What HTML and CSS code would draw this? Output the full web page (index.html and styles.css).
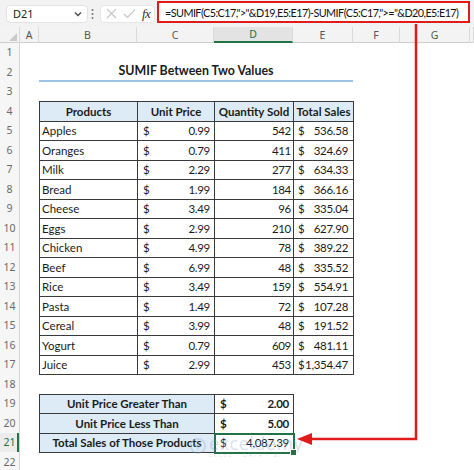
FILE: index.html
```html
<!DOCTYPE html>
<html>
<head>
<meta charset="utf-8">
<link rel="stylesheet" href="styles.css">
</head>
<body>
<div class="app">
  <div class="fbar">
    <div class="namebox">
      <span class="nb-text">D21</span>
      <svg class="chev" width="8" height="6" viewBox="0 0 8 6"><path d="M1 1.5 L4 4.5 L7 1.5" fill="none" stroke="#444" stroke-width="1.3"/></svg>
    </div>
    <svg class="vdots" width="3" height="12" viewBox="0 0 3 12"><circle cx="1.5" cy="2" r="1" fill="#777"/><circle cx="1.5" cy="6" r="1" fill="#777"/><circle cx="1.5" cy="10" r="1" fill="#777"/></svg>
    <div class="fbtns">
      <svg width="11" height="11" viewBox="0 0 11 11"><path d="M1 1 L10 10 M10 1 L1 10" fill="none" stroke="#c8c8c8" stroke-width="1.2"/></svg>
      <svg width="13" height="11" viewBox="0 0 13 11"><path d="M1 6 L4.5 9.5 L12 1.5" fill="none" stroke="#c8c8c8" stroke-width="1.2"/></svg>
      <span class="fx">fx</span>
    </div>
    <div class="formula">=SUMIF(C5:C17,"&gt;"&amp;D19,E5:E17)-SUMIF(C5:C17,"&gt;="&amp;D20,E5:E17)</div>
  </div>

  <div class="colhdr">
    <div class="corner"><span class="tri"></span></div>
    <div class="ch">A</div>
    <div class="ch">B</div>
    <div class="ch">C</div>
    <div class="ch sel">D</div>
    <div class="ch">E</div>
    <div class="ch">F</div>
    <div class="ch">G</div>
    <div class="ch"></div>
  </div>

  <div class="sheet">
    <div class="rowhdr">
      <div class="rh">1</div><div class="rh">2</div><div class="rh">3</div><div class="rh">4</div>
      <div class="rh">5</div><div class="rh">6</div><div class="rh">7</div><div class="rh">8</div>
      <div class="rh">9</div><div class="rh">10</div><div class="rh">11</div><div class="rh">12</div>
      <div class="rh">13</div><div class="rh">14</div><div class="rh">15</div><div class="rh">16</div>
      <div class="rh">17</div><div class="rh">18</div><div class="rh">19</div><div class="rh">20</div>
      <div class="rh sel">21</div><div class="rh">22</div>
    </div>

    <div class="cells">
      <div class="title">SUMIF Between Two Values</div>

      <div class="data">
        <div class="c h">Products</div><div class="c h">Unit Price</div><div class="c h">Quantity Sold</div><div class="c h">Total Sales</div>

        <div class="c t">Apples</div><div class="c m"><span>$</span><span>0.99</span></div><div class="c q">542</div><div class="c m2"><span>$</span><span>536.58</span></div>
        <div class="c t">Oranges</div><div class="c m"><span>$</span><span>0.79</span></div><div class="c q">411</div><div class="c m2"><span>$</span><span>324.69</span></div>
        <div class="c t">Milk</div><div class="c m"><span>$</span><span>2.29</span></div><div class="c q">277</div><div class="c m2"><span>$</span><span>634.33</span></div>
        <div class="c t">Bread</div><div class="c m"><span>$</span><span>1.99</span></div><div class="c q">184</div><div class="c m2"><span>$</span><span>366.16</span></div>
        <div class="c t">Cheese</div><div class="c m"><span>$</span><span>3.49</span></div><div class="c q">96</div><div class="c m2"><span>$</span><span>335.04</span></div>
        <div class="c t">Eggs</div><div class="c m"><span>$</span><span>2.99</span></div><div class="c q">210</div><div class="c m2"><span>$</span><span>627.90</span></div>
        <div class="c t">Chicken</div><div class="c m"><span>$</span><span>4.99</span></div><div class="c q">78</div><div class="c m2"><span>$</span><span>389.22</span></div>
        <div class="c t">Beef</div><div class="c m"><span>$</span><span>6.99</span></div><div class="c q">48</div><div class="c m2"><span>$</span><span>335.52</span></div>
        <div class="c t">Rice</div><div class="c m"><span>$</span><span>3.49</span></div><div class="c q">159</div><div class="c m2"><span>$</span><span>554.91</span></div>
        <div class="c t">Pasta</div><div class="c m"><span>$</span><span>1.49</span></div><div class="c q">72</div><div class="c m2"><span>$</span><span>107.28</span></div>
        <div class="c t">Cereal</div><div class="c m"><span>$</span><span>3.99</span></div><div class="c q">48</div><div class="c m2"><span>$</span><span>191.52</span></div>
        <div class="c t">Yogurt</div><div class="c m"><span>$</span><span>0.79</span></div><div class="c q">609</div><div class="c m2"><span>$</span><span>481.11</span></div>
        <div class="c t">Juice</div><div class="c m"><span>$</span><span>2.99</span></div><div class="c q">453</div><div class="c m2"><span>$</span><span>1,354.47</span></div>
      </div>

      <div class="summary">
        <div class="c h">Unit Price Greater Than</div><div class="c m b"><span>$</span><span>2.00</span></div>
        <div class="c h">Unit Price Less Than</div><div class="c m b"><span>$</span><span>5.00</span></div>
        <div class="c h">Total Sales of Those Products</div><div class="c m active"><span>$</span><span>4,087.39</span></div>
      </div>
    </div>
  </div>

  <div class="wm">
    <svg class="wm-logo" width="16" height="16" viewBox="0 0 18 18"><circle cx="9" cy="9" r="8" fill="none" stroke="#8aa6c8" stroke-width="2"/><path d="M5 9 h8 M9 5 v8" stroke="#8aa6c8" stroke-width="2"/></svg>
    <div class="wm-text">
      <span class="wm-main">exceldemy</span>
      <span class="wm-sub">EXCEL · DATA · BI</span>
    </div>
  </div>

  <svg class="arrow" width="474" height="470" viewBox="0 0 474 470">
    <path d="M416 24 V439 H310" fill="none" stroke="#e01b1b" stroke-width="2.5"/>
    <path d="M297 439 L312 433 L312 445 Z" fill="#e01b1b"/>
  </svg>
</div>
</body>
</html>
```

FILE: styles.css
```css
* { box-sizing: border-box; }
html, body { margin: 0; padding: 0; background: #ffffff; }
body { width: 474px; height: 470px; overflow: hidden; font-family: "Lato", "Liberation Sans", sans-serif; color: #1b1b1b; }

.app { position: relative; width: 474px; height: 470px; overflow: hidden; }

/* formula bar */
.fbar {
  height: 27px;
  background: #f2f2f2;
  display: flex;
  align-items: center;
  padding-left: 6px;
}
.namebox {
  width: 82px;
  height: 18px;
  background: #fff;
  border: 1px solid #e2e2e2;
  border-radius: 4px;
  display: flex;
  align-items: center;
  justify-content: space-between;
  padding: 0 5px 0 6px;
  font-family: "Noto Sans", "Liberation Sans", sans-serif;
  font-size: 11px;
  color: #222;
}
.vdots { margin-left: 3px; }
.fbtns {
  margin-left: 6px;
  width: 55px;
  height: 18px;
  background: #fff;
  border: 1px solid #e6e6e6;
  border-radius: 4px;
  display: flex;
  align-items: center;
  gap: 6px;
  padding-left: 5px;
}
.fx {
  font-family: "Liberation Serif", "DejaVu Serif", serif;
  font-style: italic;
  font-size: 13px;
  color: #333;
  letter-spacing: -0.5px;
}
.formula {
  margin-left: 2px;
  width: 313px;
  height: 22px;
  margin-top: -3px;
  background: #fff;
  border: 2px solid #e01b1b;
  display: flex;
  align-items: center;
  padding-left: 6px;
  font-size: 10.8px;
  letter-spacing: -0.55px;
  color: #111;
  white-space: nowrap;
  overflow: hidden;
}

/* column header */
.colhdr {
  height: 15.5px;
  display: grid;
  grid-template-columns: 20px 19px 98px 77px 79px 60px 47px 70px 1fr;
  background: #f3f3f3;
  border-bottom: 1px solid #cfcfcf;
}
.corner { position: relative; border-right: 1px solid #d8d8d8; }
.tri {
  position: absolute; right: 2px; bottom: 2px;
  width: 0; height: 0;
  border-left: 8px solid transparent;
  border-bottom: 8px solid #c9c9c9;
}
.ch {
  border-right: 1px solid #dadada;
  display: flex; align-items: center; justify-content: center;
  font-family: "Noto Sans", "Liberation Sans", sans-serif;
  font-size: 10.5px;
  color: #555;
}
.ch.sel { background: #e3e3e3; color: #217346; border-bottom: 2px solid #217346; }

/* sheet */
.sheet { display: flex; }
.rowhdr { width: 20px; background: #f6f6f6; border-right: 1px solid #d4d4d4; }
.rh {
  height: 19.5px;
  display: flex; align-items: center; justify-content: center;
  font-family: "Noto Sans", "Liberation Sans", sans-serif;
  font-size: 10.5px;
  color: #6a6a6a;
}
.rh.sel { color: #217346; background: #ececec; box-shadow: inset -2px 0 0 #217346; }

.cells {
  flex: 1;
  display: grid;
  grid-template-columns: 19px 98px 77px 79px 60px 47px 70px 1fr;
  grid-template-rows: repeat(22, 19.5px);
}

.title {
  grid-row: 2; grid-column: 2 / 6;
  display: flex; align-items: center; justify-content: center;
  font-weight: 700; font-size: 12.4px;
  border-bottom: 2px solid #9dc3e6;
}

.data {
  grid-row: 4 / 18; grid-column: 2 / 6;
  display: grid;
  grid-template-columns: 98px 77px 79px 60px;
  grid-template-rows: repeat(14, 19.5px);
  border-top: 1px solid #3a3a3a;
  border-left: 1px solid #3a3a3a;
  width: 315px;
  height: 274px;
}
.summary {
  grid-row: 19 / 22; grid-column: 2 / 5;
  display: grid;
  grid-template-columns: 175px 79px;
  grid-template-rows: repeat(3, 19.5px);
  border-top: 1px solid #3a3a3a;
  border-left: 1px solid #3a3a3a;
  width: 255px;
  height: 59.5px;
}

.c {
  border-right: 1px solid #3a3a3a;
  border-bottom: 1px solid #3a3a3a;
  display: flex; align-items: center;
  font-size: 11.5px;
  white-space: nowrap;
}
.h { background: #ddebf7; font-weight: 700; justify-content: center; }
.t { padding-left: 2px; }
.q { justify-content: flex-end; padding-right: 2px; letter-spacing: -0.3px; }
.m { justify-content: space-between; padding: 0 4px 0 5px; letter-spacing: -0.3px; }
.m2 { justify-content: space-between; padding: 0 5px 0 4px; letter-spacing: -0.3px; }
.b { font-weight: 700; }
.active { position: relative; }
.active::after {
  content: "";
  position: absolute;
  left: -1px; top: -1px; right: -2px; bottom: -2px;
  border: 2px solid #217346;
}
.active::before {
  content: "";
  position: absolute;
  right: -4px; bottom: -4px;
  width: 5px; height: 5px;
  background: #217346;
  border: 1px solid #fff;
  z-index: 2;
}

/* watermark */
.wm {
  position: absolute;
  left: 190px; top: 434px;
  display: flex; align-items: center; gap: 3px;
  opacity: 0.3;
  pointer-events: none;
}
.wm-text { display: flex; flex-direction: column; line-height: 1; }
.wm-main { font-family: "Open Sans", sans-serif; font-size: 18px; color: #7f9fc6; letter-spacing: 0.5px; }
.wm-sub { font-family: "Open Sans", sans-serif; font-size: 5px; color: #7f9fc6; letter-spacing: 2px; margin-top: 1px; }

.arrow { position: absolute; left: 0; top: 0; pointer-events: none; }
```
